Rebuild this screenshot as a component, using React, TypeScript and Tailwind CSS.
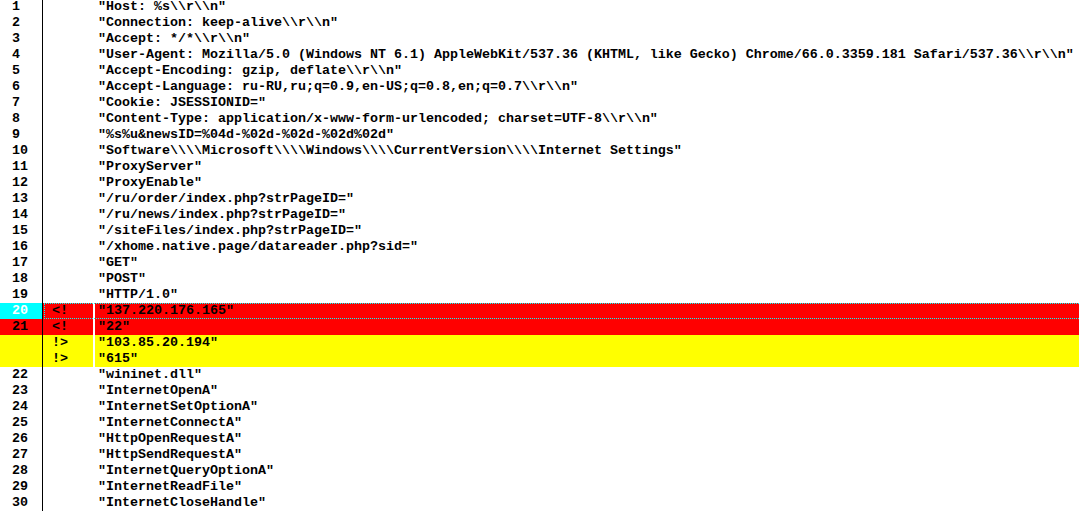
type Row = {
  num?: number;
  mark?: string;
  text: string;
  kind?: "del" | "add" | "focus";
};

const rows: Row[] = [
  { num: 1, text: '"Host: %s\\\\r\\\\n"' },
  { num: 2, text: '"Connection: keep-alive\\\\r\\\\n"' },
  { num: 3, text: '"Accept: */*\\\\r\\\\n"' },
  {
    num: 4,
    text: '"User-Agent: Mozilla/5.0 (Windows NT 6.1) AppleWebKit/537.36 (KHTML, like Gecko) Chrome/66.0.3359.181 Safari/537.36\\\\r\\\\n"',
  },
  { num: 5, text: '"Accept-Encoding: gzip, deflate\\\\r\\\\n"' },
  { num: 6, text: '"Accept-Language: ru-RU,ru;q=0.9,en-US;q=0.8,en;q=0.7\\\\r\\\\n"' },
  { num: 7, text: '"Cookie: JSESSIONID="' },
  { num: 8, text: '"Content-Type: application/x-www-form-urlencoded; charset=UTF-8\\\\r\\\\n"' },
  { num: 9, text: '"%s%u&newsID=%04d-%02d-%02d-%02d%02d"' },
  { num: 10, text: '"Software\\\\\\\\Microsoft\\\\\\\\Windows\\\\\\\\CurrentVersion\\\\\\\\Internet Settings"' },
  { num: 11, text: '"ProxyServer"' },
  { num: 12, text: '"ProxyEnable"' },
  { num: 13, text: '"/ru/order/index.php?strPageID="' },
  { num: 14, text: '"/ru/news/index.php?strPageID="' },
  { num: 15, text: '"/siteFiles/index.php?strPageID="' },
  { num: 16, text: '"/xhome.native.page/datareader.php?sid="' },
  { num: 17, text: '"GET"' },
  { num: 18, text: '"POST"' },
  { num: 19, text: '"HTTP/1.0"' },
  { num: 20, mark: "<!", text: '"137.220.176.165"', kind: "focus" },
  { num: 21, mark: "<!", text: '"22"', kind: "del" },
  { mark: "!>", text: '"103.85.20.194"', kind: "add" },
  { mark: "!>", text: '"615"', kind: "add" },
  { num: 22, text: '"wininet.dll"' },
  { num: 23, text: '"InternetOpenA"' },
  { num: 24, text: '"InternetSetOptionA"' },
  { num: 25, text: '"InternetConnectA"' },
  { num: 26, text: '"HttpOpenRequestA"' },
  { num: 27, text: '"HttpSendRequestA"' },
  { num: 28, text: '"InternetQueryOptionA"' },
  { num: 29, text: '"InternetReadFile"' },
  { num: 30, text: '"InternetCloseHandle"' },
];

function DiffRow({ row }: { row: Row }) {
  const bg =
    row.kind === "add" ? "bg-[#ffff00]" : row.kind ? "bg-[#ff0000]" : "bg-white";
  const numBg =
    row.kind === "focus" ? "bg-[#00ffff] text-white" : `${bg} text-black`;

  return (
    <div className="relative flex h-4 leading-4 whitespace-pre">
      <div className={`w-[42px] shrink-0 pl-[12px] ${numBg}`}>{row.num ?? ""}</div>
      <div className="w-px shrink-0 bg-black" />
      <div className={`w-[50px] shrink-0 pl-[9px] ${bg}`}>{row.mark ?? ""}</div>
      <div className="w-[2px] shrink-0 bg-white" />
      <div className={`flex-1 pl-[3px] ${bg}`}>{row.text}</div>
      {row.kind === "focus" && (
        <div className="pointer-events-none absolute top-0 bottom-0 left-[44px] -right-1 border border-dotted border-[#00ffff]" />
      )}
    </div>
  );
}

export default function App() {
  return (
    <div className="h-[512px] w-full overflow-hidden bg-white">
      <div className="-mt-px font-['Liberation_Mono',monospace] text-[13.333px] font-bold text-black">
        {rows.map((row, i) => (
          <DiffRow key={i} row={row} />
        ))}
      </div>
    </div>
  );
}
